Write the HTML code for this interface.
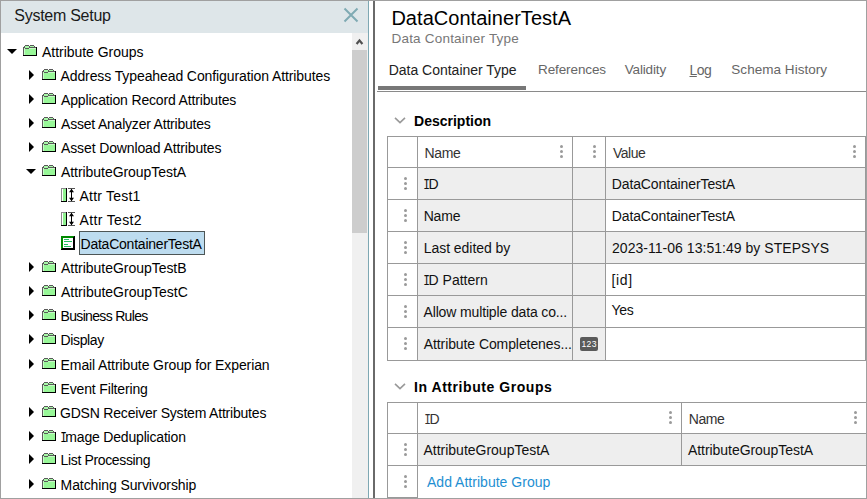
<!DOCTYPE html>
<html><head><meta charset="utf-8"><title>System Setup</title>
<style>
html,body{margin:0;padding:0;}
body{width:867px;height:499px;overflow:hidden;position:relative;background:#fff;font-family:"Liberation Sans",sans-serif;color:#000;}
#frame{position:absolute;left:0;top:0;width:865px;height:497px;border:1px solid #a0a0a0;}
.hdr{position:absolute;left:1px;top:1px;width:367px;height:32px;background:#dee6e9;}
.xic{position:absolute;left:342px;top:6px;}
.teal{position:absolute;left:368px;top:1px;width:1px;height:497px;background:#7ea8b3;}
.dark{position:absolute;left:373px;top:1px;width:2px;height:497px;background:#6a6a6a;}
.sb{position:absolute;left:352px;top:33px;width:16px;height:465px;background:#f0f0f0;}
.thumb{position:absolute;left:352px;top:50px;width:15px;height:183px;background:#cdcdcd;}
.tr{position:absolute;height:24px;line-height:24px;font-size:14px;white-space:nowrap;color:#000;}
.ic{position:absolute;}
.tdn{position:absolute;width:0;height:0;border-left:5px solid transparent;border-right:5px solid transparent;border-top:5px solid #000;}
.trt{position:absolute;width:0;height:0;border-top:5px solid transparent;border-bottom:5px solid transparent;border-left:5px solid #000;}
.sel{position:absolute;box-sizing:border-box;background:#bddcef;border:1px solid #4d5656;}
.rt{position:absolute;white-space:nowrap;}
.ct,.hd{position:absolute;font-size:14px;line-height:16px;white-space:nowrap;color:#111;}
.hd{color:#333;}
.link{color:#1e8fd2;}
.si{display:inline-block;width:4.6px;font-family:"Liberation Mono";transform:scaleX(0.8);transform-origin:0 0;text-indent:-1px;letter-spacing:0;}
.hl{position:absolute;height:1px;background:#999;}
.vl{position:absolute;width:1px;background:#999;}
.dots{position:absolute;width:3px;height:13px;}
.dots i{display:block;width:3px;height:3px;border-radius:50%;background:#9a9a9a;margin-bottom:2px;}
.badge{position:absolute;width:18px;height:14px;border-radius:2px;background:#5a5a5a;color:#fff;font-size:8.6px;line-height:14px;text-align:center;letter-spacing:0.4px;text-indent:0.4px;}
</style></head><body>
<div id="frame"></div>
<div class="hdr"><div id="systitle" class="rt" style="left:13.32px;top:5px;letter-spacing:-0.273px;font-size:16px;line-height:20px;color:#1a1a1a">System Setup</div>
<svg class="xic" width="16" height="16" viewBox="0 0 16 16"><path d="M1.5 1.5L14.5 14.5M14.5 1.5L1.5 14.5" stroke="#7faab3" stroke-width="2"/></svg>
</div>
<div class="teal"></div>
<div class="sb"></div><div class="thumb"></div>
<svg style="position:absolute;left:354px;top:37px" width="11" height="9" viewBox="0 0 11 9"><path d="M2.6 7L5.5 3.4L8.4 7" stroke="#505050" stroke-width="2.2" fill="none"/></svg>
<div class="tdn" style="left:7px;top:49px"></div>
<svg class="ic" style="left:23px;top:45px" width="14" height="11" viewBox="0 0 14 11" shape-rendering="crispEdges"><path d="M2 0h4v1h-4zM7 0h4v1h-4zM1 1h1v1h-1zM6 1h1v1h-1zM11 1h1v1h-1zM0 2h2v9h-2zM6 2h7v1h-7zM2 3h4v1h-4z" fill="#5a5a5a"/><path d="M2 1h4v2h-4zM7 1h4v1h-4z" fill="#a8f9a8"/><path d="M2 4h11v6h-11zM1 3h1v7h-1z" fill="#98f798"/><path d="M6 3h7v1h-7z" fill="#c6fcc6"/><path d="M1 3h1v7h-1z" fill="#c8fdc8"/><path d="M13 2h1v9h-14v-1h13z" fill="#000"/></svg>
<div id="tr0" class="tr" style="left:42.00px;top:40px;letter-spacing:-0.033px;">Attribute Groups</div>
<div class="trt" style="left:29px;top:70px"></div>
<svg class="ic" style="left:42px;top:69px" width="14" height="11" viewBox="0 0 14 11" shape-rendering="crispEdges"><path d="M2 0h4v1h-4zM7 0h4v1h-4zM1 1h1v1h-1zM6 1h1v1h-1zM11 1h1v1h-1zM0 2h2v9h-2zM6 2h7v1h-7zM2 3h4v1h-4z" fill="#5a5a5a"/><path d="M2 1h4v2h-4zM7 1h4v1h-4z" fill="#a8f9a8"/><path d="M2 4h11v6h-11zM1 3h1v7h-1z" fill="#98f798"/><path d="M6 3h7v1h-7z" fill="#c6fcc6"/><path d="M1 3h1v7h-1z" fill="#c8fdc8"/><path d="M13 2h1v9h-14v-1h13z" fill="#000"/></svg>
<div id="tr1" class="tr" style="left:60.48px;top:64px;letter-spacing:-0.098px;">Address Typeahead Configuration Attributes</div>
<div class="trt" style="left:29px;top:94px"></div>
<svg class="ic" style="left:42px;top:93px" width="14" height="11" viewBox="0 0 14 11" shape-rendering="crispEdges"><path d="M2 0h4v1h-4zM7 0h4v1h-4zM1 1h1v1h-1zM6 1h1v1h-1zM11 1h1v1h-1zM0 2h2v9h-2zM6 2h7v1h-7zM2 3h4v1h-4z" fill="#5a5a5a"/><path d="M2 1h4v2h-4zM7 1h4v1h-4z" fill="#a8f9a8"/><path d="M2 4h11v6h-11zM1 3h1v7h-1z" fill="#98f798"/><path d="M6 3h7v1h-7z" fill="#c6fcc6"/><path d="M1 3h1v7h-1z" fill="#c8fdc8"/><path d="M13 2h1v9h-14v-1h13z" fill="#000"/></svg>
<div id="tr2" class="tr" style="left:61.00px;top:88px;letter-spacing:-0.161px;">Application Record Attributes</div>
<div class="trt" style="left:29px;top:118px"></div>
<svg class="ic" style="left:42px;top:117px" width="14" height="11" viewBox="0 0 14 11" shape-rendering="crispEdges"><path d="M2 0h4v1h-4zM7 0h4v1h-4zM1 1h1v1h-1zM6 1h1v1h-1zM11 1h1v1h-1zM0 2h2v9h-2zM6 2h7v1h-7zM2 3h4v1h-4z" fill="#5a5a5a"/><path d="M2 1h4v2h-4zM7 1h4v1h-4z" fill="#a8f9a8"/><path d="M2 4h11v6h-11zM1 3h1v7h-1z" fill="#98f798"/><path d="M6 3h7v1h-7z" fill="#c6fcc6"/><path d="M1 3h1v7h-1z" fill="#c8fdc8"/><path d="M13 2h1v9h-14v-1h13z" fill="#000"/></svg>
<div id="tr3" class="tr" style="left:61.00px;top:112px;letter-spacing:-0.208px;">Asset Analyzer Attributes</div>
<div class="trt" style="left:29px;top:142px"></div>
<svg class="ic" style="left:42px;top:141px" width="14" height="11" viewBox="0 0 14 11" shape-rendering="crispEdges"><path d="M2 0h4v1h-4zM7 0h4v1h-4zM1 1h1v1h-1zM6 1h1v1h-1zM11 1h1v1h-1zM0 2h2v9h-2zM6 2h7v1h-7zM2 3h4v1h-4z" fill="#5a5a5a"/><path d="M2 1h4v2h-4zM7 1h4v1h-4z" fill="#a8f9a8"/><path d="M2 4h11v6h-11zM1 3h1v7h-1z" fill="#98f798"/><path d="M6 3h7v1h-7z" fill="#c6fcc6"/><path d="M1 3h1v7h-1z" fill="#c8fdc8"/><path d="M13 2h1v9h-14v-1h13z" fill="#000"/></svg>
<div id="tr4" class="tr" style="left:61.00px;top:136px;letter-spacing:-0.123px;">Asset Download Attributes</div>
<div class="tdn" style="left:26px;top:169px"></div>
<svg class="ic" style="left:42px;top:165px" width="14" height="11" viewBox="0 0 14 11" shape-rendering="crispEdges"><path d="M2 0h4v1h-4zM7 0h4v1h-4zM1 1h1v1h-1zM6 1h1v1h-1zM11 1h1v1h-1zM0 2h2v9h-2zM6 2h7v1h-7zM2 3h4v1h-4z" fill="#5a5a5a"/><path d="M2 1h4v2h-4zM7 1h4v1h-4z" fill="#a8f9a8"/><path d="M2 4h11v6h-11zM1 3h1v7h-1z" fill="#98f798"/><path d="M6 3h7v1h-7z" fill="#c6fcc6"/><path d="M1 3h1v7h-1z" fill="#c8fdc8"/><path d="M13 2h1v9h-14v-1h13z" fill="#000"/></svg>
<div id="tr5" class="tr" style="left:61.00px;top:160px;letter-spacing:-0.056px;">AttributeGroupTestA</div>
<svg class="ic" style="left:61px;top:188px" width="14" height="14" viewBox="0 0 14 14"><g shape-rendering="crispEdges"><rect x="0" y="0" width="6" height="14" fill="#8a8a8a"/><rect x="1" y="1" width="1" height="12" fill="#fff"/><rect x="2" y="1" width="3" height="12" fill="#90f290"/><rect x="5" y="0" width="1" height="14" fill="#000"/><rect x="0" y="13" width="6" height="1" fill="#000"/><rect x="7" y="0" width="7" height="1" fill="#555"/><rect x="7" y="13" width="7" height="1" fill="#555"/><rect x="10" y="1" width="1" height="12" fill="#000"/></g><path d="M8 4.2L10.5 0.8L13 4.2ZM8 9.8L10.5 13.2L13 9.8Z" fill="#000"/></svg>
<div id="tr6" class="tr" style="left:79.48px;top:184px;letter-spacing:0.222px;">Attr Test1</div>
<svg class="ic" style="left:61px;top:212px" width="14" height="14" viewBox="0 0 14 14"><g shape-rendering="crispEdges"><rect x="0" y="0" width="6" height="14" fill="#8a8a8a"/><rect x="1" y="1" width="1" height="12" fill="#fff"/><rect x="2" y="1" width="3" height="12" fill="#90f290"/><rect x="5" y="0" width="1" height="14" fill="#000"/><rect x="0" y="13" width="6" height="1" fill="#000"/><rect x="7" y="0" width="7" height="1" fill="#555"/><rect x="7" y="13" width="7" height="1" fill="#555"/><rect x="10" y="1" width="1" height="12" fill="#000"/></g><path d="M8 4.2L10.5 0.8L13 4.2ZM8 9.8L10.5 13.2L13 9.8Z" fill="#000"/></svg>
<div id="tr7" class="tr" style="left:79.48px;top:208px;letter-spacing:0.351px;">Attr Test2</div>
<svg class="ic" style="left:61px;top:236px" width="14" height="14" viewBox="0 0 14 14" shape-rendering="crispEdges"><rect x="0" y="0" width="14" height="14" fill="#000"/><path d="M0 0H13V1H12V2H2V12H1V13H0Z" fill="#008a00"/><rect x="2" y="2" width="10" height="10" fill="#fff"/><path d="M3 3h5v1h-5zM3 5h8v1h-8zM3 8h4v1h-4zM3 10h7v1h-7z" fill="#22c062"/></svg>
<div class="sel" style="left:79px;top:231px;width:126px;height:24px"></div>
<div id="tr8" class="tr" style="left:80.50px;top:232px;letter-spacing:-0.226px;">DataContainerTestA</div>
<div class="trt" style="left:29px;top:262px"></div>
<svg class="ic" style="left:42px;top:261px" width="14" height="11" viewBox="0 0 14 11" shape-rendering="crispEdges"><path d="M2 0h4v1h-4zM7 0h4v1h-4zM1 1h1v1h-1zM6 1h1v1h-1zM11 1h1v1h-1zM0 2h2v9h-2zM6 2h7v1h-7zM2 3h4v1h-4z" fill="#5a5a5a"/><path d="M2 1h4v2h-4zM7 1h4v1h-4z" fill="#a8f9a8"/><path d="M2 4h11v6h-11zM1 3h1v7h-1z" fill="#98f798"/><path d="M6 3h7v1h-7z" fill="#c6fcc6"/><path d="M1 3h1v7h-1z" fill="#c8fdc8"/><path d="M13 2h1v9h-14v-1h13z" fill="#000"/></svg>
<div id="tr9" class="tr" style="left:61.00px;top:256px;letter-spacing:-0.028px;">AttributeGroupTestB</div>
<div class="trt" style="left:29px;top:286px"></div>
<svg class="ic" style="left:42px;top:285px" width="14" height="11" viewBox="0 0 14 11" shape-rendering="crispEdges"><path d="M2 0h4v1h-4zM7 0h4v1h-4zM1 1h1v1h-1zM6 1h1v1h-1zM11 1h1v1h-1zM0 2h2v9h-2zM6 2h7v1h-7zM2 3h4v1h-4z" fill="#5a5a5a"/><path d="M2 1h4v2h-4zM7 1h4v1h-4z" fill="#a8f9a8"/><path d="M2 4h11v6h-11zM1 3h1v7h-1z" fill="#98f798"/><path d="M6 3h7v1h-7z" fill="#c6fcc6"/><path d="M1 3h1v7h-1z" fill="#c8fdc8"/><path d="M13 2h1v9h-14v-1h13z" fill="#000"/></svg>
<div id="tr10" class="tr" style="left:61.00px;top:280px;letter-spacing:-0.002px;">AttributeGroupTestC</div>
<div class="trt" style="left:29px;top:310px"></div>
<svg class="ic" style="left:42px;top:309px" width="14" height="11" viewBox="0 0 14 11" shape-rendering="crispEdges"><path d="M2 0h4v1h-4zM7 0h4v1h-4zM1 1h1v1h-1zM6 1h1v1h-1zM11 1h1v1h-1zM0 2h2v9h-2zM6 2h7v1h-7zM2 3h4v1h-4z" fill="#5a5a5a"/><path d="M2 1h4v2h-4zM7 1h4v1h-4z" fill="#a8f9a8"/><path d="M2 4h11v6h-11zM1 3h1v7h-1z" fill="#98f798"/><path d="M6 3h7v1h-7z" fill="#c6fcc6"/><path d="M1 3h1v7h-1z" fill="#c8fdc8"/><path d="M13 2h1v9h-14v-1h13z" fill="#000"/></svg>
<div id="tr11" class="tr" style="left:60.60px;top:304px;letter-spacing:-0.680px;">Business Rules</div>
<div class="trt" style="left:29px;top:334px"></div>
<svg class="ic" style="left:42px;top:333px" width="14" height="11" viewBox="0 0 14 11" shape-rendering="crispEdges"><path d="M2 0h4v1h-4zM7 0h4v1h-4zM1 1h1v1h-1zM6 1h1v1h-1zM11 1h1v1h-1zM0 2h2v9h-2zM6 2h7v1h-7zM2 3h4v1h-4z" fill="#5a5a5a"/><path d="M2 1h4v2h-4zM7 1h4v1h-4z" fill="#a8f9a8"/><path d="M2 4h11v6h-11zM1 3h1v7h-1z" fill="#98f798"/><path d="M6 3h7v1h-7z" fill="#c6fcc6"/><path d="M1 3h1v7h-1z" fill="#c8fdc8"/><path d="M13 2h1v9h-14v-1h13z" fill="#000"/></svg>
<div id="tr12" class="tr" style="left:60.60px;top:328px;letter-spacing:-0.380px;">Display</div>
<div class="trt" style="left:29px;top:359px"></div>
<svg class="ic" style="left:42px;top:358px" width="14" height="11" viewBox="0 0 14 11" shape-rendering="crispEdges"><path d="M2 0h4v1h-4zM7 0h4v1h-4zM1 1h1v1h-1zM6 1h1v1h-1zM11 1h1v1h-1zM0 2h2v9h-2zM6 2h7v1h-7zM2 3h4v1h-4z" fill="#5a5a5a"/><path d="M2 1h4v2h-4zM7 1h4v1h-4z" fill="#a8f9a8"/><path d="M2 4h11v6h-11zM1 3h1v7h-1z" fill="#98f798"/><path d="M6 3h7v1h-7z" fill="#c6fcc6"/><path d="M1 3h1v7h-1z" fill="#c8fdc8"/><path d="M13 2h1v9h-14v-1h13z" fill="#000"/></svg>
<div id="tr13" class="tr" style="left:60.60px;top:353px;letter-spacing:-0.103px;">Email Attribute Group for Experian</div>
<svg class="ic" style="left:42px;top:382px" width="14" height="11" viewBox="0 0 14 11" shape-rendering="crispEdges"><path d="M2 0h4v1h-4zM7 0h4v1h-4zM1 1h1v1h-1zM6 1h1v1h-1zM11 1h1v1h-1zM0 2h2v9h-2zM6 2h7v1h-7zM2 3h4v1h-4z" fill="#5a5a5a"/><path d="M2 1h4v2h-4zM7 1h4v1h-4z" fill="#a8f9a8"/><path d="M2 4h11v6h-11zM1 3h1v7h-1z" fill="#98f798"/><path d="M6 3h7v1h-7z" fill="#c6fcc6"/><path d="M1 3h1v7h-1z" fill="#c8fdc8"/><path d="M13 2h1v9h-14v-1h13z" fill="#000"/></svg>
<div id="tr14" class="tr" style="left:60.60px;top:377px;letter-spacing:-0.163px;">Event Filtering</div>
<div class="trt" style="left:29px;top:407px"></div>
<svg class="ic" style="left:42px;top:406px" width="14" height="11" viewBox="0 0 14 11" shape-rendering="crispEdges"><path d="M2 0h4v1h-4zM7 0h4v1h-4zM1 1h1v1h-1zM6 1h1v1h-1zM11 1h1v1h-1zM0 2h2v9h-2zM6 2h7v1h-7zM2 3h4v1h-4z" fill="#5a5a5a"/><path d="M2 1h4v2h-4zM7 1h4v1h-4z" fill="#a8f9a8"/><path d="M2 4h11v6h-11zM1 3h1v7h-1z" fill="#98f798"/><path d="M6 3h7v1h-7z" fill="#c6fcc6"/><path d="M1 3h1v7h-1z" fill="#c8fdc8"/><path d="M13 2h1v9h-14v-1h13z" fill="#000"/></svg>
<div id="tr15" class="tr" style="left:60.00px;top:401px;letter-spacing:-0.200px;">GDSN Receiver System Attributes</div>
<div class="trt" style="left:29px;top:431px"></div>
<svg class="ic" style="left:42px;top:430px" width="14" height="11" viewBox="0 0 14 11" shape-rendering="crispEdges"><path d="M2 0h4v1h-4zM7 0h4v1h-4zM1 1h1v1h-1zM6 1h1v1h-1zM11 1h1v1h-1zM0 2h2v9h-2zM6 2h7v1h-7zM2 3h4v1h-4z" fill="#5a5a5a"/><path d="M2 1h4v2h-4zM7 1h4v1h-4z" fill="#a8f9a8"/><path d="M2 4h11v6h-11zM1 3h1v7h-1z" fill="#98f798"/><path d="M6 3h7v1h-7z" fill="#c6fcc6"/><path d="M1 3h1v7h-1z" fill="#c8fdc8"/><path d="M13 2h1v9h-14v-1h13z" fill="#000"/></svg>
<div id="tr16" class="tr" style="left:60.72px;top:425px;letter-spacing:-0.184px;"><span class="si">I</span>mage Deduplication</div>
<div class="trt" style="left:29px;top:454px"></div>
<svg class="ic" style="left:42px;top:453px" width="14" height="11" viewBox="0 0 14 11" shape-rendering="crispEdges"><path d="M2 0h4v1h-4zM7 0h4v1h-4zM1 1h1v1h-1zM6 1h1v1h-1zM11 1h1v1h-1zM0 2h2v9h-2zM6 2h7v1h-7zM2 3h4v1h-4z" fill="#5a5a5a"/><path d="M2 1h4v2h-4zM7 1h4v1h-4z" fill="#a8f9a8"/><path d="M2 4h11v6h-11zM1 3h1v7h-1z" fill="#98f798"/><path d="M6 3h7v1h-7z" fill="#c6fcc6"/><path d="M1 3h1v7h-1z" fill="#c8fdc8"/><path d="M13 2h1v9h-14v-1h13z" fill="#000"/></svg>
<div id="tr17" class="tr" style="left:60.60px;top:448px;letter-spacing:-0.360px;">List Processing</div>
<div class="trt" style="left:29px;top:479px"></div>
<svg class="ic" style="left:42px;top:478px" width="14" height="11" viewBox="0 0 14 11" shape-rendering="crispEdges"><path d="M2 0h4v1h-4zM7 0h4v1h-4zM1 1h1v1h-1zM6 1h1v1h-1zM11 1h1v1h-1zM0 2h2v9h-2zM6 2h7v1h-7zM2 3h4v1h-4z" fill="#5a5a5a"/><path d="M2 1h4v2h-4zM7 1h4v1h-4z" fill="#a8f9a8"/><path d="M2 4h11v6h-11zM1 3h1v7h-1z" fill="#98f798"/><path d="M6 3h7v1h-7z" fill="#c6fcc6"/><path d="M1 3h1v7h-1z" fill="#c8fdc8"/><path d="M13 2h1v9h-14v-1h13z" fill="#000"/></svg>
<div id="tr18" class="tr" style="left:60.60px;top:473px;letter-spacing:-0.100px;">Matching Survivorship</div>
<div class="dark"></div>
<div id="title" class="rt" style="left:391.40px;top:6px;letter-spacing:0.038px;font-size:20px;line-height:24px;color:#000">DataContainerTestA</div>
<div id="sub" class="rt" style="left:391.48px;top:31px;letter-spacing:0.207px;font-size:13.5px;line-height:16px;color:#777">Data Container Type</div>
<div id="tab1" class="rt" style="left:388.66px;top:62px;letter-spacing:-0.009px;font-size:14px;line-height:16px;color:#222">Data Container Type</div>
<div id="tab2" class="rt" style="left:538.00px;top:62px;letter-spacing:-0.102px;font-size:13.5px;line-height:16px;color:#666">References</div>
<div id="tab3" class="rt" style="left:624.66px;top:62px;letter-spacing:-0.143px;font-size:13.5px;line-height:16px;color:#666">Validity</div>
<div id="tab4" class="rt" style="left:689.50px;top:62px;letter-spacing:-0.500px;font-size:14px;line-height:16px;color:#666"><u>L</u>og</div>
<div id="tab5" class="rt" style="left:731.34px;top:62px;letter-spacing:0.038px;font-size:13.5px;line-height:16px;color:#666">Schema History</div>
<div id="desc" class="rt" style="left:414.04px;top:113px;letter-spacing:0.004px;font-size:14px;line-height:16px;font-weight:bold;color:#000">Description</div>
<div id="inag" class="rt" style="left:414.00px;top:379px;letter-spacing:0.556px;font-size:14px;line-height:16px;font-weight:bold;color:#000">In Attribute Groups</div>
<div style="position:absolute;left:378px;top:86px;width:148px;height:4px;background:#777"></div>
<div style="position:absolute;left:377px;top:91px;width:489px;height:1px;background:#8a8a8a"></div>
<svg style="position:absolute;left:394px;top:116px" width="12" height="8" viewBox="0 0 12 8"><path d="M1 1.8L6 6.6L11 1.8" stroke="#999" stroke-width="1.6" fill="none"/></svg>
<div style="position:absolute;left:418px;top:168px;width:154px;height:31px;background:#eeeeee"></div>
<div style="position:absolute;left:573px;top:168px;width:32px;height:31px;background:#eeeeee"></div>
<div style="position:absolute;left:606px;top:168px;width:259px;height:31px;background:#eeeeee"></div>
<div style="position:absolute;left:418px;top:200px;width:154px;height:31px;background:#eeeeee"></div>
<div style="position:absolute;left:573px;top:200px;width:32px;height:31px;background:#eeeeee"></div>
<div style="position:absolute;left:418px;top:232px;width:154px;height:31px;background:#eeeeee"></div>
<div style="position:absolute;left:573px;top:232px;width:32px;height:31px;background:#eeeeee"></div>
<div style="position:absolute;left:606px;top:232px;width:259px;height:31px;background:#eeeeee"></div>
<div style="position:absolute;left:418px;top:264px;width:154px;height:31px;background:#eeeeee"></div>
<div style="position:absolute;left:573px;top:264px;width:32px;height:31px;background:#eeeeee"></div>
<div style="position:absolute;left:418px;top:296px;width:154px;height:31px;background:#eeeeee"></div>
<div style="position:absolute;left:573px;top:296px;width:32px;height:31px;background:#eeeeee"></div>
<div style="position:absolute;left:418px;top:328px;width:154px;height:32px;background:#eeeeee"></div>
<div style="position:absolute;left:573px;top:328px;width:32px;height:32px;background:#eeeeee"></div>
<div class="hl" style="left:387px;top:136px;width:479px"></div>
<div class="hl" style="left:387px;top:167px;width:479px"></div>
<div class="hl" style="left:387px;top:199px;width:479px"></div>
<div class="hl" style="left:387px;top:231px;width:479px"></div>
<div class="hl" style="left:387px;top:263px;width:479px"></div>
<div class="hl" style="left:387px;top:295px;width:479px"></div>
<div class="hl" style="left:387px;top:327px;width:479px"></div>
<div class="hl" style="left:387px;top:360px;width:479px"></div>
<div class="vl" style="left:387px;top:136px;height:225px"></div>
<div class="vl" style="left:417px;top:136px;height:225px"></div>
<div class="vl" style="left:572px;top:136px;height:225px"></div>
<div class="vl" style="left:605px;top:136px;height:225px"></div>
<div class="vl" style="left:865px;top:136px;height:225px"></div>
<div id="h1name" class="hd" style="left:424.44px;top:145px;letter-spacing:-0.293px;">Name</div>
<div id="h1val" class="hd" style="left:613.00px;top:145px;letter-spacing:-0.500px;">Value</div>
<div class="dots" style="left:559.5px;top:145.0px"><i></i><i></i><i></i></div>
<div class="dots" style="left:593.2px;top:145.0px"><i></i><i></i><i></i></div>
<div class="dots" style="left:852.5px;top:145.0px"><i></i><i></i><i></i></div>
<div class="dots" style="left:403.5px;top:176.5px"><i></i><i></i><i></i></div>
<div id="l0" class="ct" style="left:424.00px;top:176px;letter-spacing:0.000px;"><span class="si">I</span>D</div>
<div id="v0" class="ct" style="left:611.72px;top:176px;letter-spacing:-0.115px;">DataContainerTestA</div>
<div class="dots" style="left:403.5px;top:208.5px"><i></i><i></i><i></i></div>
<div id="l1" class="ct" style="left:423.68px;top:208px;letter-spacing:-0.160px;">Name</div>
<div id="v1" class="ct" style="left:611.72px;top:208px;letter-spacing:-0.115px;">DataContainerTestA</div>
<div class="dots" style="left:403.5px;top:240.5px"><i></i><i></i><i></i></div>
<div id="l2" class="ct" style="left:423.68px;top:240px;letter-spacing:-0.038px;">Last edited by</div>
<div id="v2" class="ct" style="left:612.00px;top:240px;letter-spacing:0.034px;">2023-11-06 13:51:49 by STEPSYS</div>
<div class="dots" style="left:403.5px;top:272.5px"><i></i><i></i><i></i></div>
<div id="l3" class="ct" style="left:424.00px;top:272px;letter-spacing:0.000px;"><span class="si">I</span>D Pattern</div>
<div id="v3" class="ct" style="left:611.54px;top:272px;letter-spacing:0.640px;">[id]</div>
<div class="dots" style="left:403.5px;top:304.5px"><i></i><i></i><i></i></div>
<div id="l4" class="ct" style="left:423.48px;top:304px;letter-spacing:-0.137px;">Allow multiple data co...</div>
<div id="v4" class="ct" style="left:611.52px;top:302px;letter-spacing:-0.260px;">Yes</div>
<div class="dots" style="left:403.5px;top:337.0px"><i></i><i></i><i></i></div>
<div id="l5" class="ct" style="left:423.72px;top:336px;letter-spacing:-0.087px;">Attribute Completenes...</div>
<div class="badge" style="left:580px;top:336.5px">123</div>
<svg style="position:absolute;left:394px;top:382px" width="12" height="8" viewBox="0 0 12 8"><path d="M1 1.8L6 6.6L11 1.8" stroke="#999" stroke-width="1.6" fill="none"/></svg>
<div style="position:absolute;left:418px;top:434px;width:263px;height:31px;background:#eeeeee"></div>
<div style="position:absolute;left:682px;top:434px;width:184px;height:31px;background:#eeeeee"></div>
<div class="hl" style="left:387px;top:402px;width:479px"></div>
<div class="hl" style="left:387px;top:433px;width:479px"></div>
<div class="hl" style="left:387px;top:465px;width:479px"></div>
<div class="hl" style="left:387px;top:497px;width:31px"></div>
<div class="vl" style="left:387px;top:402px;height:96px"></div>
<div class="vl" style="left:417px;top:402px;height:96px"></div>
<div class="vl" style="left:681px;top:402px;height:64px"></div>
<div id="h2id" class="hd" style="left:425.00px;top:411px;letter-spacing:0.000px;"><span class="si">I</span>D</div>
<div id="h2name" class="hd" style="left:688.72px;top:411px;letter-spacing:-0.427px;">Name</div>
<div class="dots" style="left:668.5px;top:411.0px"><i></i><i></i><i></i></div>
<div class="dots" style="left:853.5px;top:411.0px"><i></i><i></i><i></i></div>
<div class="dots" style="left:403.5px;top:442.5px"><i></i><i></i><i></i></div>
<div class="dots" style="left:403.5px;top:474.5px"><i></i><i></i><i></i></div>
<div id="r2a" class="ct" style="left:423.50px;top:442px;letter-spacing:-0.009px;">AttributeGroupTestA</div>
<div id="r2b" class="ct" style="left:688.00px;top:442px;letter-spacing:-0.056px;">AttributeGroupTestA</div>
<div id="add" class="ct link" style="left:427.00px;top:474px;letter-spacing:0.020px;">Add Attribute Group</div>
</body></html>
